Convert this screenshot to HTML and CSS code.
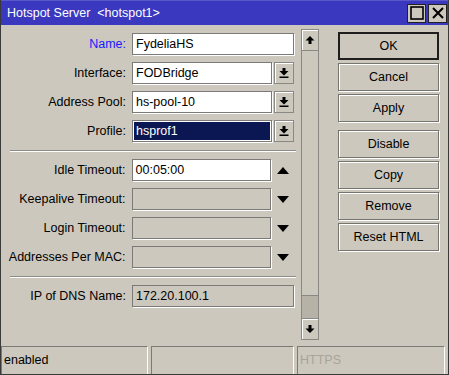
FILE: index.html
```html
<!DOCTYPE html>
<html lang="en">
<head>
  <meta charset="UTF-8" />
  <title>Hotspot Server</title>
  <meta name="viewport" content="width=device-width, initial-scale=1.0" />
  <link rel="stylesheet" href="styles.css">
</head>
<body>
  <div class="window">
    <div class="titlebar">
      <span class="title">Hotspot Server &nbsp;&lt;hotspot1&gt;</span>
      <div class="tb-buttons">
        <span class="tb-btn">
          <svg width="16" height="16" viewBox="0 0 16 16"><rect x="2" y="2" width="12" height="12" fill="none" stroke="#000" stroke-width="1.6"/></svg>
        </span>
        <span class="tb-btn">
          <svg width="16" height="16" viewBox="0 0 16 16"><path d="M3 3 L13 13 M13 3 L3 13" stroke="#000" stroke-width="2"/></svg>
        </span>
      </div>
    </div>

    <div class="content">
      <div class="form">
        <div class="row">
          <label class="lbl active">Name:</label>
          <div class="field wide">FydeliaHS</div>
        </div>
        <div class="row">
          <label class="lbl">Interface:</label>
          <div class="field">FODBridge</div>
          <span class="drop"><svg width="10" height="10" viewBox="0 0 10 10"><path d="M3.5 0 H6.5 V3 H9.5 L5 7.5 L0.5 3 H3.5 Z" fill="#000"/><rect x="0.5" y="8.5" width="9" height="1.5" fill="#000"/></svg></span>
        </div>
        <div class="row">
          <label class="lbl">Address Pool:</label>
          <div class="field">hs-pool-10</div>
          <span class="drop"><svg width="10" height="10" viewBox="0 0 10 10"><path d="M3.5 0 H6.5 V3 H9.5 L5 7.5 L0.5 3 H3.5 Z" fill="#000"/><rect x="0.5" y="8.5" width="9" height="1.5" fill="#000"/></svg></span>
        </div>
        <div class="row">
          <label class="lbl">Profile:</label>
          <div class="field"><span class="selected">hsprof1</span></div>
          <span class="drop"><svg width="10" height="10" viewBox="0 0 10 10"><path d="M3.5 0 H6.5 V3 H9.5 L5 7.5 L0.5 3 H3.5 Z" fill="#000"/><rect x="0.5" y="8.5" width="9" height="1.5" fill="#000"/></svg></span>
        </div>

        <div class="sep"></div>

        <div class="row">
          <label class="lbl">Idle Timeout:</label>
          <div class="field">00:05:00</div>
          <span class="tri"><svg width="12" height="7" viewBox="0 0 12 7"><path d="M6 0 L12 7 H0 Z" fill="#000"/></svg></span>
        </div>
        <div class="row">
          <label class="lbl">Keepalive Timeout:</label>
          <div class="field off"></div>
          <span class="tri"><svg width="12" height="7" viewBox="0 0 12 7"><path d="M0 0 H12 L6 7 Z" fill="#000"/></svg></span>
        </div>
        <div class="row">
          <label class="lbl">Login Timeout:</label>
          <div class="field off"></div>
          <span class="tri"><svg width="12" height="7" viewBox="0 0 12 7"><path d="M0 0 H12 L6 7 Z" fill="#000"/></svg></span>
        </div>
        <div class="row">
          <label class="lbl">Addresses Per MAC:</label>
          <div class="field off"></div>
          <span class="tri"><svg width="12" height="7" viewBox="0 0 12 7"><path d="M0 0 H12 L6 7 Z" fill="#000"/></svg></span>
        </div>

        <div class="sep"></div>

        <div class="row">
          <label class="lbl">IP of DNS Name:</label>
          <div class="field wide off">172.20.100.1</div>
        </div>
      </div>

      <div class="scrollbar">
        <div class="sb-btn"><svg width="10" height="10" viewBox="0 0 10 10"><path d="M5 1 L9.5 5.5 H6.5 V9 H3.5 V5.5 H0.5 Z" fill="#000"/></svg></div>
        <div class="sb-track"><div class="sb-thumb"></div></div>
        <div class="sb-btn"><svg width="10" height="10" viewBox="0 0 10 10"><path d="M3.5 1 H6.5 V4.5 H9.5 L5 9 L0.5 4.5 H3.5 Z" fill="#000"/></svg></div>
      </div>

      <div class="buttons">
        <button class="btn default">OK</button>
        <button class="btn">Cancel</button>
        <button class="btn">Apply</button>
        <button class="btn spaced">Disable</button>
        <button class="btn">Copy</button>
        <button class="btn">Remove</button>
        <button class="btn">Reset HTML</button>
      </div>
    </div>

    <div class="statusbar">
      <div class="panel first">enabled</div>
      <div class="panel second"></div>
      <div class="panel third">HTTPS</div>
    </div>
  </div>
</body>
</html>
```

FILE: styles.css
```css
body {
  margin: 0;
  font-family: 'Liberation Sans', Arial, sans-serif;
  font-size: 12.5px;
  color: #000;
  background: #ccc8be;
}

.window {
  width: 449px;
  height: 375px;
  box-sizing: border-box;
  border: 1px solid #3a3a3a;
  border-top: none;
  background: #ccc8be;
  display: flex;
  flex-direction: column;
}

.titlebar {
  height: 24px;
  background: #3a38be;
  border-top: 1px solid #5a58c8;
  display: flex;
  align-items: center;
  justify-content: space-between;
  padding: 0 1px 0 6px;
  color: white;
  font-size: 12.5px;
}

.tb-buttons {
  display: flex;
  gap: 2px;
}

.tb-btn {
  width: 17px;
  height: 17px;
  background: #ccc8be;
  border: 1px solid #222;
  display: flex;
  align-items: center;
  justify-content: center;
}

.content {
  flex: 1;
  display: flex;
  padding-top: 4px;
}

.form {
  width: 293px;
  padding-top: 4px;
  margin-right: 7px;
}

.row {
  display: flex;
  align-items: center;
  height: 22px;
  margin-bottom: 7px;
}

.lbl {
  width: 125px;
  margin-right: 6px;
  text-align: right;
}

.lbl.active {
  color: #1a1aff;
}

.field {
  width: 140px;
  height: 22px;
  box-sizing: border-box;
  background: white;
  border: 1px solid #7c7a76;
  box-shadow: 1px 1px 0 #fff;
  padding: 2px 3px;
  line-height: 17px;
  white-space: nowrap;
}

.field.wide {
  width: 162px;
}

.field.off {
  background: #ccc8be;
}

.selected {
  display: block;
  margin: -1px -2px;
  padding: 0 2px;
  background: #0b1752;
  color: white;
  line-height: 18px;
}

.drop {
  width: 20px;
  height: 22px;
  box-sizing: border-box;
  margin-left: 2px;
  border: 1px solid #8a8882;
  box-shadow: inset 1px 1px 0 #fff;
  display: flex;
  align-items: center;
  justify-content: center;
}

.tri {
  width: 23px;
  display: flex;
  justify-content: center;
}

.sep {
  margin: 0 -2px 8px 9px;
  border-top: 1px solid #8e8c86;
  border-bottom: 1px solid #fff;
  position: relative;
  top: 1px;
}

.scrollbar {
  width: 18px;
  height: 311px;
  display: flex;
  flex-direction: column;
}

.sb-btn {
  height: 22px;
  box-sizing: border-box;
  border: 1px solid #8a8882;
  box-shadow: inset 1px 1px 0 #fff;
  display: flex;
  align-items: center;
  justify-content: center;
}

.sb-track {
  flex: 1;
  border-left: 1px solid #8a8882;
  border-right: 1px solid #8a8882;
  display: flex;
  flex-direction: column;
  justify-content: flex-end;
}

.sb-thumb {
  height: 22px;
  background: #b6b2a8;
  border-top: 1px solid #8a8882;
}

.buttons {
  margin-left: 19px;
  padding-top: 3px;
  width: 101px;
  display: flex;
  flex-direction: column;
  gap: 3px;
}

.btn {
  height: 28px;
  font-family: 'Liberation Sans', Arial, sans-serif;
  font-size: 12.5px;
  color: #000;
  background: #ccc8be;
  border: 1px solid #76746e;
  box-shadow: inset 1px 1px 0 #fff, 1px 1px 0 #fff;
  padding: 0;
}

.btn.default {
  border: 2px solid #1e1e1e;
  box-shadow: none;
}

.btn.spaced {
  margin-top: 5px;
}

.statusbar {
  height: 28px;
  display: flex;
  gap: 3px;
  padding-right: 3px;
}

.panel {
  box-sizing: border-box;
  height: 28px;
  border-top: 1px solid #7c7a76;
  border-left: 1px solid #7c7a76;
  border-right: 1px solid #fff;
  padding: 0 2px;
  line-height: 26px;
}

.panel.first {
  width: 147px;
}

.panel.second {
  width: 143px;
}

.panel.third {
  flex: 1;
  color: #a8a49a;
}
```
